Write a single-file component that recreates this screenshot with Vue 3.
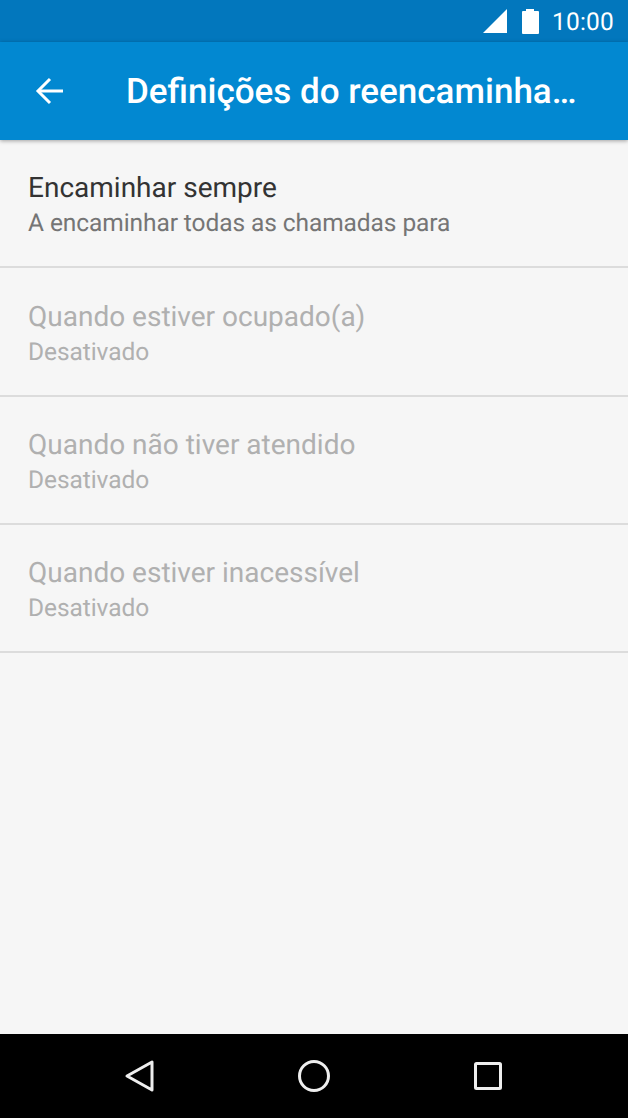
<template>
  <div class="phone">
    <div class="status">
      <svg class="signal" width="24" height="24" viewBox="0 0 24 24"><path d="M24 0 V24 H0 Z" fill="#fff" /></svg>
      <svg class="battery" width="17" height="25" viewBox="0 0 17 25"><path d="M4 0 H12 V2 H16 Q17 2 17 3 V24 Q17 25 16 25 H1 Q0 25 0 24 V3 Q0 2 1 2 H4 Z" fill="#fff" /></svg>
      <span class="clock">10:00</span>
    </div>

    <header class="toolbar">
      <svg class="back" width="28" height="28" viewBox="0 0 28 28" fill="none" stroke="#fff" stroke-width="3"><path d="M28 14 H3" /><path d="M15 2 L3 14 L15 26" /></svg>
      <h1 class="title">Definições do reencaminha…</h1>
    </header>

    <main class="list">
      <div v-for="item in items" :key="item.title" class="row" :class="{ disabled: item.disabled }">
        <div class="row-title">{{ item.title }}</div>
        <div class="row-sub">{{ item.sub }}</div>
      </div>
    </main>

    <nav class="navbar">
      <svg width="32" height="34" viewBox="0 0 32 34" fill="none" stroke="#eee" stroke-width="3" stroke-linejoin="round"><path d="M28 3 V31 L3 17 Z" /></svg>
      <svg width="34" height="34" viewBox="0 0 34 34" fill="none" stroke="#eee" stroke-width="3"><circle cx="17" cy="17" r="14.5" /></svg>
      <svg class="recents" width="30" height="30" viewBox="0 0 30 30" fill="none" stroke="#eee" stroke-width="3" stroke-linejoin="round"><rect x="2.5" y="2.5" width="25" height="25" rx="1" /></svg>
    </nav>
  </div>
</template>

<script setup>
const items = [
  { title: 'Encaminhar sempre', sub: 'A encaminhar todas as chamadas para', disabled: false },
  { title: 'Quando estiver ocupado(a)', sub: 'Desativado', disabled: true },
  { title: 'Quando não tiver atendido', sub: 'Desativado', disabled: true },
  { title: 'Quando estiver inacessível', sub: 'Desativado', disabled: true }
]
</script>

<style>
html,
body {
  margin: 0;
  overflow: hidden;
}
</style>

<style scoped>
.phone {
  width: 628px;
  height: 1118px;
  display: flex;
  flex-direction: column;
  background: #f6f6f6;
  font-family: Roboto, sans-serif;
  text-rendering: geometricPrecision;
}
.status {
  height: 42px;
  flex: none;
  box-sizing: border-box;
  padding-right: 14px;
  display: flex;
  align-items: center;
  justify-content: flex-end;
  background: #0277bd;
  color: #fff;
}
.signal {
  margin-right: 15px;
}
.battery {
  margin-right: 13px;
}
.clock {
  font-size: 24.5px;
  letter-spacing: 0.2px;
}
.toolbar {
  height: 98px;
  flex: none;
  display: flex;
  align-items: center;
  padding-left: 35px;
  background: #0288d1;
  box-shadow: 0 1px 4px rgba(0, 0, 0, 0.35);
  position: relative;
}
.title {
  margin: 0 0 0 63px;
  font-size: 35px;
  font-weight: 500;
  color: #fff;
  white-space: nowrap;
}
.list {
  flex: 1;
}
.row {
  height: 128.3px;
  box-sizing: border-box;
  padding: 31.4px 28px 0;
  border-bottom: 2px solid #dcdcdc;
}
.row-title {
  font-size: 28px;
  line-height: 34px;
  color: #333;
}
.row-sub {
  font-size: 24.5px;
  line-height: 35px;
  letter-spacing: -0.08px;
  color: #757575;
}
.disabled .row-title,
.disabled .row-sub {
  color: #b0b0b0;
}
.navbar {
  height: 84px;
  flex: none;
  box-sizing: border-box;
  padding-right: 1px;
  display: flex;
  align-items: center;
  justify-content: center;
  gap: 141px;
  background: #000;
}
.recents {
  margin-left: 1px;
}
</style>
